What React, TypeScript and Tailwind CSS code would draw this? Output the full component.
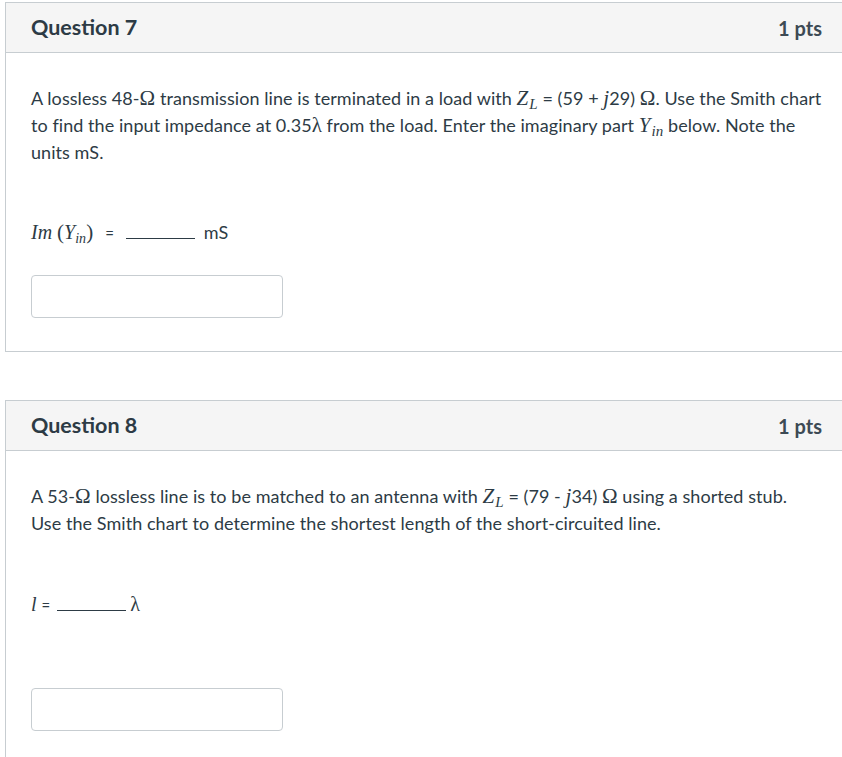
import React from "react";

const mathFont = { fontFamily: '"Liberation Serif", "DejaVu Serif", serif' };

function M({ children, size = "text-[21px]" }: { children: React.ReactNode; size?: string }) {
  return (
    <span className={`italic ${size}`} style={mathFont}>
      {children}
    </span>
  );
}

function Ohm() {
  return (
    <span className="text-[21px]" style={mathFont}>
      Ω
    </span>
  );
}

function Header({ title }: { title: string }) {
  return (
    <div className="flex h-[50px] items-center justify-between border-b border-[#c7cdd1] bg-[#f5f5f5] pl-[25px] pr-[33px]">
      <span className="text-[21.5px] font-bold text-[#2d3b45]">{title}</span>
      <span className="text-[20px] font-bold text-[#3d4a54]">1 pts</span>
    </div>
  );
}

function AnswerBox() {
  return <div className="h-[43px] w-[252px] rounded-[4px] border border-[#c7cdd1] bg-white" />;
}

export default function App() {
  return (
    <div
      className="h-[757px] w-[842px] overflow-hidden bg-white pt-[2px] pl-[5px] text-[#2d3b45]"
      style={{ fontFamily: 'Lato, "Noto Sans", sans-serif' }}
    >
      {/* question 7 */}
      <div className="w-[851px] border border-[#c7cdd1]">
        <Header title="Question 7" />
        <div className="pt-[32px] pb-[33px] pl-[25px] pr-[10px] text-[18px] leading-[27px]">
          <p className="whitespace-nowrap tracking-[0.06px]">
            A lossless 48-<Ohm /> transmission line is terminated in a load with <M>Z<sub className="ml-[1px] text-[15px]">L</sub></M> = (59 + <M>j</M>29) <Ohm />. Use the Smith chart
            <br />
            to find the input impedance at 0.35<span style={mathFont} className="text-[21px]">λ</span> from the load. Enter the imaginary part <M>Y<sub className="ml-[1px] text-[15px]">in</sub></M> below. Note the
            <br />
            units mS.
          </p>
          <div className="mt-[53px] flex h-[27px] items-baseline">
            <M size="text-[20px]">Im</M>
            <span className="ml-[5px] text-[21px]" style={mathFont}>(</span>
            <M size="text-[20px]">Y<sub className="text-[14px]">in</sub></M>
            <span className="text-[21px]" style={mathFont}>)</span>
            <span className="ml-[12px] text-[15px]">=</span>
            <span className="ml-[12px] inline-block w-[69px] border-b border-[#2d3b45]" />
            <span className="ml-[9px] text-[18px]">mS</span>
          </div>
          <div className="mt-[29px]">
            <AnswerBox />
          </div>
        </div>
      </div>

      {/* question 8 */}
      <div className="mt-[48px] w-[851px] border border-[#c7cdd1] pb-[60px]">
        <Header title="Question 8" />
        <div className="pt-[32px] pl-[25px] pr-[10px] text-[18px] leading-[27px]">
          <p className="whitespace-nowrap tracking-[0.06px]">
            A 53-<Ohm /> lossless line is to be matched to an antenna with <M>Z<sub className="ml-[1px] text-[15px]">L</sub></M> = (79 - <M>j</M>34) <Ohm /> using a shorted stub.
            <br />
            Use the Smith chart to determine the shortest length of the short-circuited line.
          </p>
          <div className="mt-[54px] flex h-[27px] items-baseline">
            <M size="text-[20px]">l</M>
            <span className="ml-[5px] text-[15px]">=</span>
            <span className="ml-[7px] inline-block w-[69px] border-b border-[#2d3b45]" />
            <span className="ml-[4px] text-[20px]" style={mathFont}>λ</span>
          </div>
          <div className="mt-[70px]">
            <AnswerBox />
          </div>
        </div>
      </div>
    </div>
  );
}
